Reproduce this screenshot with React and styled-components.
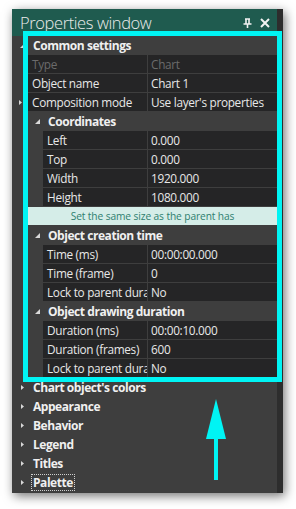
import React, { Fragment } from "react";
import styled, { createGlobalStyle } from "styled-components";

const GlobalStyle = createGlobalStyle`
  body {
    margin: 0;
    padding: 0;
    background: #ffffff;
    font-family: "Open Sans", "Liberation Sans", sans-serif;
  }
`;

const Page = styled.div`
  width: 296px;
  height: 509px;
  padding: 9px 0 0 12px;
  box-sizing: border-box;
  position: relative;
`;

const Window = styled.div`
  width: 271px;
  height: 484px;
  display: flex;
  background: #3e3e3e;
  box-shadow: 2px 3px 10px rgba(0, 0, 0, 0.55);
`;

const Main = styled.div`
  width: 265px;
  display: flex;
  flex-direction: column;
`;

const Splitter = styled.div`
  width: 6px;
  background: #2d2d2d;
`;

const TitleBar = styled.div`
  height: 27px;
  flex: none;
  background: #1f5b4f;
  display: flex;
  align-items: center;
  padding: 0 7px 0 8px;
  color: #ececec;
`;

const Title = styled.div`
  flex: 1;
  font-size: 16.5px;
  font-weight: 300;
  letter-spacing: -0.4px;
  line-height: 24px;
  margin-top: 1px;
`;

const TitleIcons = styled.div`
  display: flex;
  gap: 8px;
  align-items: center;
  margin-top: 1px;
`;

const Grid = styled.div`
  display: flex;
  flex-direction: column;
`;

const Row = styled.div`
  height: 19px;
  display: flex;
  font-size: 11.8px;
  letter-spacing: -0.3px;
  line-height: 18px;
`;

const Margin = styled.div`
  width: ${(p) => p.$w}px;
  flex: none;
  display: flex;
  align-items: center;
  justify-content: center;
  background: #3e3e3e;
`;

const Name = styled.div`
  width: ${(p) => p.$w}px;
  flex: none;
  background: #252526;
  border-bottom: 1px solid #3e3e3e;
  border-right: 1px solid #3e3e3e;
  color: ${(p) => (p.$disabled ? "#6b6b6b" : "#e8e8e8")};
  padding-left: 4px;
  box-sizing: border-box;
  white-space: nowrap;
  overflow: hidden;
`;

const Value = styled.div`
  flex: 1;
  background: #252526;
  border-bottom: 1px solid #3e3e3e;
  color: ${(p) => (p.$disabled ? "#6b6b6b" : "#e8e8e8")};
  padding-left: 3px;
  white-space: nowrap;
  overflow: hidden;
`;

const Header = styled.div`
  height: 19px;
  flex: none;
  display: flex;
  align-items: center;
  background: #3e3e3e;
  color: #f0f0f0;
  font-size: 12px;
  font-weight: 700;
  letter-spacing: -0.45px;
  padding-left: ${(p) => p.$indent}px;
`;

const Arrow = styled.span`
  width: ${(p) => p.$w}px;
  flex: none;
  display: flex;
  align-items: center;
`;

const HeaderText = styled.span`
  padding: 0 1px;
  line-height: 15px;
  border: 1px dotted ${(p) => (p.$focus ? "#d0d0d0" : "transparent")};
`;

const HintRow = styled.div`
  height: 19px;
  display: flex;
`;

const Hint = styled.div`
  flex: 1;
  background: #d5ede8;
  color: #2e7f6f;
  font-size: 10.2px;
  letter-spacing: -0.1px;
  display: flex;
  align-items: center;
  justify-content: center;
  border-bottom: 1px solid #3e3e3e;
`;

const Highlight = styled.div`
  position: absolute;
  left: 23px;
  top: 31px;
  width: 259px;
  height: 351px;
  border: 5px solid #00f4f4;
  box-sizing: border-box;
  pointer-events: none;
`;

const Pointer = styled.svg`
  position: absolute;
  left: 205px;
  top: 398px;
`;

const Down = () => (
  <svg width="7" height="7" viewBox="0 0 7 7">
    <path d="M6 1 L6 6 L1 6 Z" fill="#d8d8d8" />
  </svg>
);

const Right = () => (
  <svg width="5" height="7" viewBox="0 0 5 7">
    <path d="M1 1 L4 3.5 L1 6 Z" fill="#d8d8d8" />
  </svg>
);

const Pin = () => (
  <svg width="9" height="10" viewBox="0 0 9 10">
    <path d="M2 1 H7 M3 1 V6 M6 1 V6 M0.5 6 H8.5 M4.5 6 V10" stroke="#f2f2f2" strokeWidth="1.6" fill="none" />
  </svg>
);

const Close = () => (
  <svg width="10" height="10" viewBox="0 0 10 10">
    <path d="M1 1 L9 9 M9 1 L1 9" stroke="#f2f2f2" strokeWidth="2" />
  </svg>
);

const Prop = ({ name, value, level = 1, expand, disabled }) => {
  const margin = level === 1 ? 16 : 31;
  return (
    <Row>
      <Margin $w={margin}>{expand && <Right />}</Margin>
      <Name $w={136 - margin} $disabled={disabled}>{name}</Name>
      <Value $disabled={disabled}>{value}</Value>
    </Row>
  );
};

const SubHeader = ({ title }) => (
  <Header $indent={22}>
    <Arrow $w={12}>
      <Down />
    </Arrow>
    <HeaderText>{title}</HeaderText>
  </Header>
);

const categories = ["Chart object's colors", "Appearance", "Behavior", "Legend", "Titles", "Palette"];

export default () => (
  <Fragment>
    <GlobalStyle />
    <Page>
      <Window>
        <Main>
          <TitleBar>
            <Title>Properties window</Title>
            <TitleIcons>
              <Pin />
              <Close />
            </TitleIcons>
          </TitleBar>
          <Grid>
            <Header $indent={7}>
              <Arrow $w={12}>
                <Down />
              </Arrow>
              <HeaderText>Common settings</HeaderText>
            </Header>
            <Prop name="Type" value="Chart" disabled />
            <Prop name="Object name" value="Chart 1" />
            <Prop name="Composition mode" value="Use layer's properties" expand />
            <SubHeader title="Coordinates" />
            <Prop name="Left" value="0.000" level={2} />
            <Prop name="Top" value="0.000" level={2} />
            <Prop name="Width" value="1920.000" level={2} />
            <Prop name="Height" value="1080.000" level={2} />
            <HintRow>
              <Margin $w={16} />
              <Hint>Set the same size as the parent has</Hint>
            </HintRow>
            <SubHeader title="Object creation time" />
            <Prop name="Time (ms)" value="00:00:00.000" level={2} />
            <Prop name="Time (frame)" value="0" level={2} />
            <Prop name="Lock to parent duration" value="No" level={2} />
            <SubHeader title="Object drawing duration" />
            <Prop name="Duration (ms)" value="00:00:10.000" level={2} />
            <Prop name="Duration (frames)" value="600" level={2} />
            <Prop name="Lock to parent duration" value="No" level={2} />
            {categories.map((c) => (
              <Header key={c} $indent={8}>
                <Arrow $w={11}>
                  <Right />
                </Arrow>
                <HeaderText $focus={c === "Palette"}>{c}</HeaderText>
              </Header>
            ))}
          </Grid>
        </Main>
        <Splitter />
      </Window>
      <Highlight />
      <Pointer width="22" height="84" viewBox="0 0 22 84">
        <path d="M11 1 L21 41 L1 41 Z" fill="#00f4f4" />
        <rect x="9" y="40" width="4" height="42" fill="#00f4f4" />
      </Pointer>
    </Page>
  </Fragment>
);
